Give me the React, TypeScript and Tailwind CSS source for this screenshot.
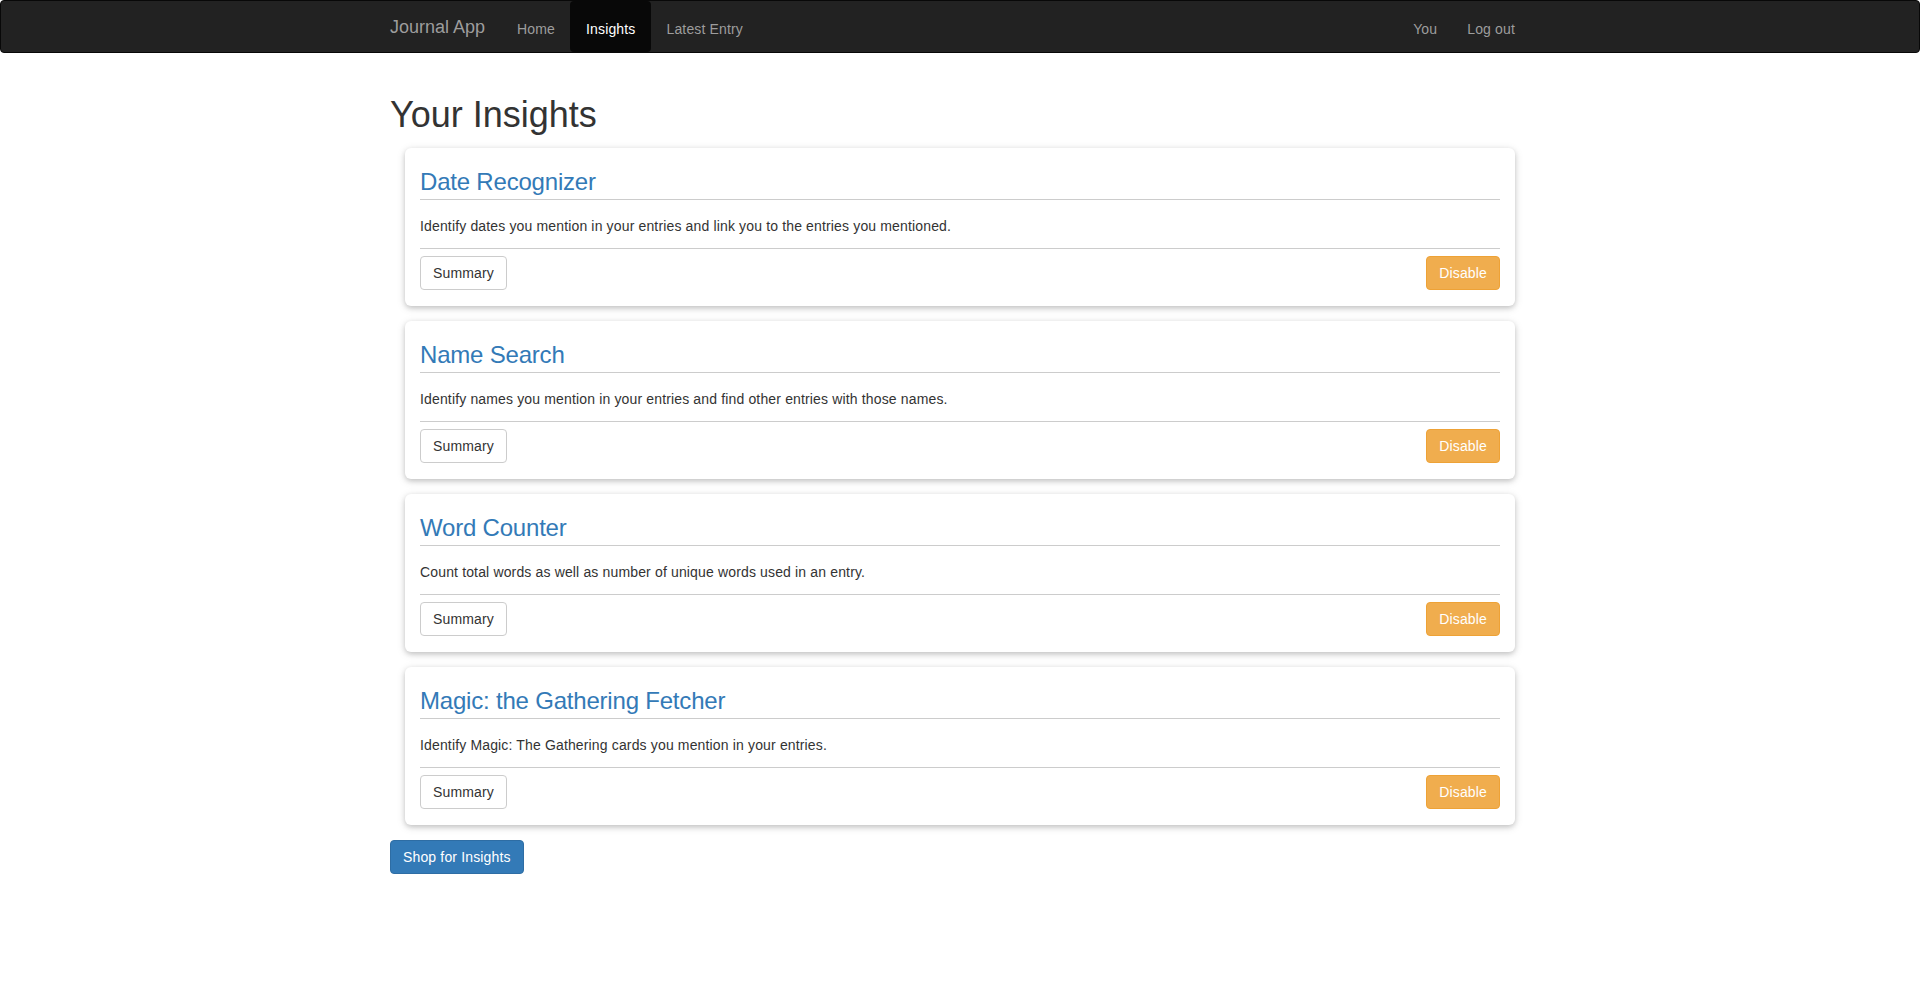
import React from "react";

const insights = [
  {
    title: "Date Recognizer",
    desc: "Identify dates you mention in your entries and link you to the entries you mentioned.",
  },
  {
    title: "Name Search",
    desc: "Identify names you mention in your entries and find other entries with those names.",
  },
  {
    title: "Word Counter",
    desc: "Count total words as well as number of unique words used in an entry.",
  },
  {
    title: "Magic: the Gathering Fetcher",
    desc: "Identify Magic: The Gathering cards you mention in your entries.",
  },
];

function Card({ title, desc }: { title: string; desc: string }) {
  return (
    <div className="mx-[15px] rounded-[6px] bg-white px-[15px] pb-[16px] shadow-[0_2px_5px_0_rgba(0,0,0,0.16),0_2px_10px_0_rgba(0,0,0,0.12)]">
      <h3 className="border-b border-[#cccccc] pb-[4px] pt-[21px] text-[24px] leading-[26px] tracking-[-0.2px] text-[#337ab7]">
        {title}
      </h3>
      <p className="mt-[16px] text-[14px] leading-[20px] tracking-[0.15px] text-[#333333]">{desc}</p>
      <div className="mt-[12px] flex justify-between border-t border-[#cccccc] pt-[7px]">
        <button className="h-[34px] rounded-[4px] border border-[#cccccc] bg-white px-[12px] text-[14px] leading-[20px] tracking-[0.15px] text-[#333333]">
          Summary
        </button>
        <button className="h-[34px] rounded-[4px] border border-[#eea236] bg-[#f0ad4e] px-[12px] text-[14px] leading-[20px] tracking-[0.15px] text-white">
          Disable
        </button>
      </div>
    </div>
  );
}

export default function App() {
  return (
    <div
      className="min-h-[981px] bg-white text-[#333333]"
      style={{ fontFamily: '"Liberation Sans", Arial, Helvetica, sans-serif' }}
    >
      <nav className="h-[53px] rounded-[4px] border border-[#080808] bg-[#222222]">
        <div className="mx-auto flex h-full w-[1170px] justify-between px-[15px]">
          <div className="flex h-full">
            <a className="pr-[17px] pt-[16px] text-[18px] leading-[20px] text-[#9d9d9d]">Journal App</a>
            <a className="px-[15px] pt-[18px] text-[14px] leading-[20px] tracking-[0.15px] text-[#9d9d9d]">Home</a>
            <a className="rounded-[4px] bg-[#080808] px-[16px] pt-[18px] text-[14px] leading-[20px] tracking-[0.15px] text-white">
              Insights
            </a>
            <a className="px-[15px] pt-[18px] text-[14px] leading-[20px] tracking-[0.15px] text-[#9d9d9d]">
              Latest Entry
            </a>
          </div>
          <div className="flex h-full">
            <a className="px-[15px] pt-[18px] text-[14px] leading-[20px] tracking-[0.15px] text-[#9d9d9d]">You</a>
            <a className="px-[15px] pt-[18px] text-[14px] leading-[20px] tracking-[0.15px] text-[#9d9d9d]">
              Log out
            </a>
          </div>
        </div>
      </nav>
      <main className="mx-auto w-[1170px] px-[15px]">
        <h1 className="mt-[42px] text-[36px] font-normal leading-[40px] text-[#333333]">Your Insights</h1>
        <div className="mt-[13px] flex flex-col gap-[15px]">
          {insights.map((i) => (
            <Card key={i.title} title={i.title} desc={i.desc} />
          ))}
        </div>
        <button className="mt-[15px] h-[34px] rounded-[4px] border border-[#2e6da4] bg-[#337ab7] px-[12px] text-[14px] leading-[20px] tracking-[0.15px] text-white">
          Shop for Insights
        </button>
      </main>
    </div>
  );
}
